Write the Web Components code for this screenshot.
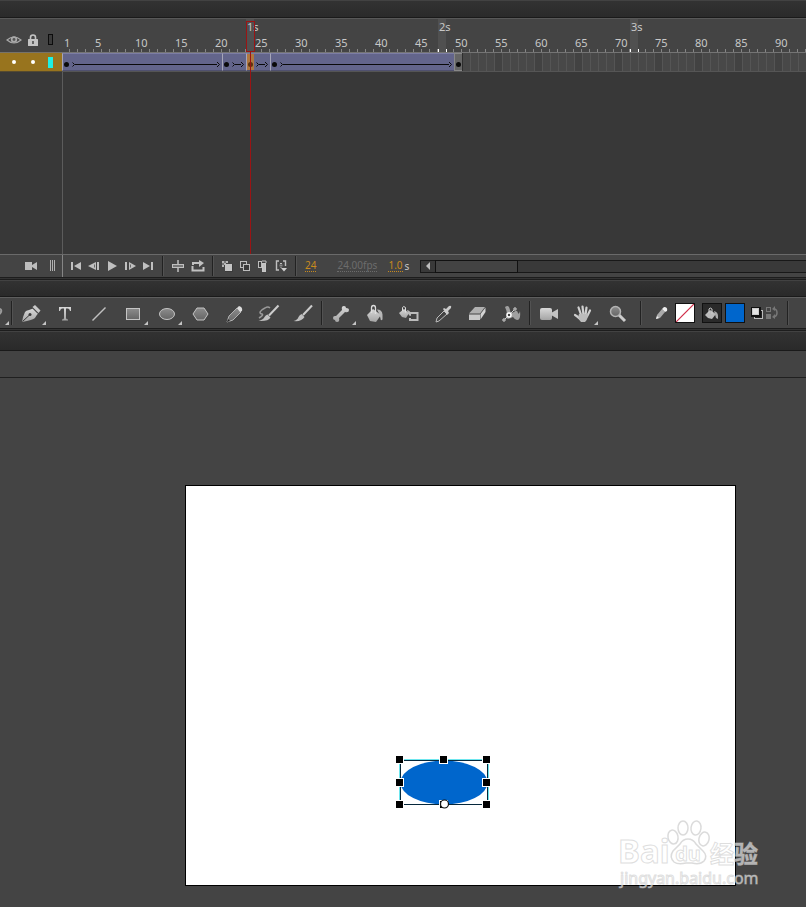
<!DOCTYPE html>
<html lang="en">
<head>
<meta charset="utf-8">
<title>Animation timeline</title>
<style>
  html, body { margin: 0; height: 100%; background: #444; }
  body { font-family: "Noto Sans", "Noto Sans CJK SC", sans-serif; font-size: 11px; color: #c8c8c8; }
</style>
</head>
<body>
<animate-app></animate-app>
<script>
const ICONS = {
  eye: [16, 12, '<path d="M1 6Q8 0 15 6Q8 12 1 6Z" fill="none" stroke="#a9a9a9" stroke-width="1.2"/><circle cx="8" cy="5.5" r="3.2" fill="#a9a9a9"/><circle cx="8" cy="5.5" r="1.4" fill="#555"/>'],
  lock: [12, 14, '<path d="M3.500 7V4.500a2.500 2.500 0 0 1 5 0V7" fill="none" stroke="#c4c4c4" stroke-width="1.600"/><rect x="1" y="6" width="10" height="7" rx=".5" fill="#c4c4c4"/><path d="M6 8v3" stroke="#444" stroke-width="1.500"/>'],
  outline: [8, 14, '<rect x="1.500" y="1.500" width="4" height="10" fill="#3a3a3a" stroke="#0c0c0c"/>'],
  camSmall: [14, 10, '<path d="M1 1h7v3l5-3v8l-5-3v3H1Z" fill="#bdbdbd"/>'],
  grip: [8, 12, '<path d="M1.500 0v11M3.500 0v11M5.500 0v11" stroke="#b0b0b0"/>'],
  first: [12, 10, '<path d="M1 1h2v8H1ZM11 1v8L4 5Z" fill="#c0c0c0"/>'],
  prev: [12, 10, '<path d="M8 1v8L0 5ZM9 1h2v8H9Z" fill="#c0c0c0"/><path d="M6.500 3.500v3" stroke="#666"/>'],
  play: [12, 12, '<path d="M2 1l9 5-9 5Z" fill="#c0c0c0"/>'],
  next: [12, 10, '<path d="M1 1h2v8H1ZM5 1v8l7-4Z" fill="#c0c0c0"/><path d="M6.500 3.500v3" stroke="#666"/>'],
  last: [12, 10, '<path d="M9 1h2v8H9ZM1 1v8l7-4Z" fill="#c0c0c0"/>'],
  center: [12, 12, '<path d="M6 0v12" stroke="#c0c0c0" stroke-width="1.500"/><rect x=".5" y="4.500" width="11" height="3" fill="#777" stroke="#c0c0c0"/>'],
  loop: [14, 12, '<path d="M2 5V3h7" fill="none" stroke="#c0c0c0" stroke-width="2"/><path d="M8 0l5 3-5 4Z" fill="#c0c0c0"/><path d="M1.500 6v4.500h11V7" fill="none" stroke="#c0c0c0" stroke-width="2"/>'],
  onion: [12, 12, '<path d="M1 1h2v2H1ZM5 1h2v2H5ZM3 3h2v2H3ZM1 5h2v2H1Z" fill="#b5b5b5"/><path d="M3 1h2v2H3ZM1 3h2v2H1Z" fill="#777"/><rect x="4" y="4" width="8" height="8" fill="#3a3a3a"/><rect x="4" y="4" width="7" height="7" fill="#c5c5c5"/>'],
  onionOut: [12, 12, '<rect x="1.500" y="1.500" width="6" height="6" fill="none" stroke="#bdbdbd"/><rect x="4.500" y="4.500" width="6" height="6" fill="#3a3a3a" stroke="#bdbdbd"/>'],
  multi: [12, 12, '<rect x="1.500" y="1.500" width="3" height="6" fill="#3a3a3a" stroke="#bdbdbd"/><path d="M5 1h4v2" fill="none" stroke="#bdbdbd"/><rect x="5.500" y="3.500" width="3" height="8" fill="#c0c0c0" stroke="#c8c8c8"/>'],
  markers: [12, 12, '<path d="M4 1H1.500v9H4M8 1h2.500v5" fill="none" stroke="#c0c0c0" stroke-width="1.400"/><path d="M5 3.500h2M6 7v1" fill="none" stroke="#c0c0c0"/><rect x="4.500" y="4.500" width="3" height="2" fill="#888"/><path d="M6 8h6l-3 3.500Z" fill="#d0d0d0"/>'],
  arrowL: [6, 8, '<path d="M5 0v8L1 4Z" fill="#bdbdbd"/>'],
  partial: [14, 30, '<path d="M0 11q3 0 2 3q-1 2-2 2" fill="none" stroke="#9a9a9a" stroke-width="2"/>'],
  pen: [34, 30, '<path d="M8 24Q9 18 11 14Q12 12.500 15 12L19 10.500L24 15.500Q22 18 21 20Q19 22 8 24Z" fill="url(#g)"/><path d="M8.500 23.500L15.500 17" stroke="#3a3a3a"/><circle cx="16" cy="16.500" r="1.500" fill="#3a3a3a"/><path d="M18.500 9L21 7L26.500 12.500L24.500 15Z" fill="#c8c8c8"/><path d="M18.500 10L24 15.500" stroke="#444"/>'],
  text: [34, 30, '<path d="M11 9h12v4h-1q-.5-2.500-2-2.500h-2V20q0 1.500 2 1.500v1h-6v-1q2 0 2-1.500v-9.500h-2q-1.500 0-2 2.500h-1Z" fill="url(#g)"/>'],
  line: [34, 30, '<path d="M10.500 22.500L23.500 9.500" stroke="#c0c0c0" stroke-width="1.400"/>'],
  rect: [34, 30, '<rect x="10.500" y="10.500" width="13" height="11" fill="url(#d)" stroke="#c4c4c4"/>'],
  oval: [34, 30, '<ellipse cx="17" cy="16" rx="7.500" ry="5.500" fill="url(#d)" stroke="#c4c4c4"/>'],
  poly: [34, 30, '<path d="M13 10h7l4 6-4 6h-7l-4-6Z" fill="url(#d)" stroke="#c4c4c4"/>'],
  pencil: [34, 30, '<path d="M9 24l2-6 8-8 4 4-8 8Z" fill="url(#d)" stroke="#b0b0b0"/><path d="M19 10l2-2q4 1 3 5l-2 1Z" fill="#ddd"/><path d="M9 24l1-3 2 2Z" fill="#222"/>'],
  brushPath: [34, 30, '<path d="M18 10Q16 8 13 10Q9 12 8 14Q8 16 10 16Q12 17 7 20" fill="none" stroke="#999" stroke-width="1.500"/><path d="M26.500 7.500L17 17.500" stroke="#ccc" stroke-width="2"/><path d="M15.500 16.500l3 3q-2 4-12 3.500 5-1.500 6-4 1-2 3-2.500Z" fill="#c0c0c0"/>'],
  brush: [34, 30, '<path d="M26 7.500L17 17" stroke="#ccc" stroke-width="2"/><path d="M15.500 16l3 3q-3 5-11 4 4-1 5-4 1-2 3-3Z" fill="#c0c0c0"/>'],
  bone: [34, 30, '<path d="M9 20q0-2 2-2l1 0 6-6q-1-4 2-4 2 0 2 2 3 0 3 2 0 3-4 2l-6 6q1 4-2 4-2 0-2-2-2 0-2-2Z" fill="url(#g)"/>'],
  bucket: [34, 30, '<path d="M9 17l6-6 8 6-5 7-6-1Z" fill="url(#g)"/><path d="M13.500 15V10q0-2.500 2-2.500 2 0 2 2.500v6" fill="none" stroke="#ddd" stroke-width="1.300"/><path d="M19 11.500q5 0 5.500 5v5q-2 2-2-1l-1-4Z" fill="#b8b8b8"/>'],
  inkBottle: [34, 30, '<path d="M7 15l5-4 5 4-3 5-4-1Z" fill="url(#g)"/><path d="M10.500 13V9.500q1-2 3 0v5" fill="none" stroke="#ddd"/><path d="M15 12q3.500 0 4 6l-3-2Z" fill="#b8b8b8"/><path d="M18 17.500V15h7.500v7H18v-2" fill="none" stroke="#bbb" stroke-width="2"/>'],
  dropper: [34, 30, '<path d="M10 24l1-4 7-7 3 3-8 7Z" fill="#444" stroke="#bbb"/><path d="M17 11l1-1 2 1 3-3q3-1 2 2l-3 3 1 2-2 2Z" fill="#ccc"/>'],
  eraser: [34, 30, '<path d="M9 15.500L15 9H25L20 15.500Z" fill="#b0b0b0"/><path d="M9 16.500H20V22H9Z" fill="#c8c8c8"/><path d="M20.500 16L25.500 9.500V14L20.500 21.500Z" fill="#d4d4d4"/>'],
  width: [34, 30, '<path d="M11 9q4-3 5 3 0 4 4 2 3-3 4 1 1 2 2-2 1 9-3 9-2 0-4-3-5 3-7 1 2-5-1-11Z" fill="#a0a0a0"/><path d="M10 22L21 11" stroke="#ccc"/><circle cx="15" cy="17" r="2" fill="#444" stroke="#fff" stroke-width="1.500"/><circle cx="10" cy="22" r="1.200" fill="#444" stroke="#ddd"/><circle cx="21" cy="11" r="1.200" fill="#444" stroke="#ddd"/>'],
  camera: [34, 30, '<rect x="8" y="10" width="12" height="12" rx="2" fill="url(#g)"/><path d="M19 15l7-4v10l-7-4Z" fill="#c4c4c4"/>'],
  hand: [34, 30, '<path d="M15.500 18L12.500 9.500M17.500 17L16.500 8.500M19.500 17L20.500 9.500M21 18.500L24 12.500M14 21Q11 18 9 17" stroke="#d0d0d0" stroke-width="2.200" stroke-linecap="round" fill="none"/><path d="M13 16h9q0 5-3 8h-4Q11 20 13 16Z" fill="#bcbcbc"/>'],
  zoom: [34, 30, '<path d="M19 17l6 6" stroke="#ccc" stroke-width="3"/><circle cx="15.500" cy="13.500" r="5" fill="url(#d)" stroke="#b4b4b4" stroke-width="1.500"/>'],
  strokePen: [20, 20, '<path d="M5 16l1-4 5-6 3 3-5 6Z" fill="#aaa"/><path d="M11 6l2-2q4 0 3 4l-2 1Z" fill="#eee"/><path d="M5 16l1-3 2 2Z" fill="#eee"/>'],
  noStroke: [18, 18, '<path d="M0 18L18 0" stroke="#d02c48" stroke-width="1.200"/>'],
  fillBucket: [18, 18, '<path d="M2 11l5-5 6 4-4 5-4-1Z" fill="#bbb"/><path d="M6 9V5q1-2 3 0v5" fill="none" stroke="#ccc"/><path d="M11 7q4 1 4 5v3l-2-1Z" fill="#aaa"/>'],
  bw: [14, 14, '<rect x="4.500" y="4.500" width="8" height="8" fill="#222" stroke="#bbb"/><rect x="1" y="1" width="10" height="10" fill="#111"/><rect x="2.500" y="2.500" width="6" height="6" fill="#e4e4e4" stroke="#ccc"/>'],
  swap: [14, 14, '<rect x="1.500" y="1.500" width="4" height="4" fill="none" stroke="#777"/><rect x="1" y="8" width="5" height="5" fill="#777"/><path d="M9 3q3 0 3 4 0 3-3 4" fill="none" stroke="#777" stroke-width="1.500"/><path d="M10 0v5L7 3ZM10 8v5l-3-2Z" fill="#777"/>'],
  paw: [44, 50, '<g fill="rgba(255,255,255,.65)" stroke="rgba(190,190,190,.55)" stroke-width="1.500"><ellipse cx="7" cy="19" rx="5" ry="7" transform="rotate(-12 7 19)"/><ellipse cx="17" cy="10" rx="5" ry="7"/><ellipse cx="30" cy="10" rx="5" ry="7" transform="rotate(8 30 10)"/><ellipse cx="38" cy="21" rx="5" ry="7" transform="rotate(14 38 21)"/><path d="M22 21q-5 0-8 5l-7 7q-4 6 1 11 4 3 12 1h6q8 2 12-2 4-5-1-10l-7-7q-3-5-8-5Z"/></g>']
};

/* Defines an element whose open shadow root is cloned from a template. */
function element(name, css, html, setup) {
  const t = document.createElement('template');
  const build = host => '<style>*{box-sizing:border-box}' + css + '</style>' + (typeof html === 'function' ? html(host) : html);
  customElements.define(name, class extends HTMLElement {
    connectedCallback() {
      if (this.shadowRoot) return;
      t.innerHTML = build(this);
      this.attachShadow({ mode: 'open' }).append(t.content.cloneNode(true));
      if (setup) setup(this);
    }
  });
}

element('ui-icon', ':host{display:block;flex:none}svg{display:block}', h => {
  const [w, ht, body] = ICONS[h.getAttribute('name')];
  return `<svg width="${w}" height="${ht}" viewBox="0 0 ${w} ${ht}" aria-hidden="true"><defs>
    <linearGradient id="g" x2="0" y2="1"><stop stop-color="#d8d8d8"/><stop offset="1" stop-color="#a4a4a4"/></linearGradient>
    <linearGradient id="d" x2="0" y2="1"><stop stop-color="#8c8c8c"/><stop offset="1" stop-color="#666"/></linearGradient></defs>${body}</svg>`;
});

element('icon-button', `
  :host{display:block;flex:none;width:var(--w,18px);height:var(--h,18px)}
  button{position:relative;display:flex;align-items:center;justify-content:center;width:100%;height:100%;padding:0;border:0;background:var(--fill,none)}
  :host([framed]) button{border:1px solid #111}
  :host([more]) button::after{content:"";position:absolute;right:2px;bottom:3px;border:2px solid;border-color:transparent #c4c4c4 #c4c4c4 transparent}`,
  h => `<button aria-label="${h.getAttribute('label')}">${h.hasAttribute('icon') ? `<ui-icon name="${h.getAttribute('icon')}"></ui-icon>` : ''}</button>`);

element('bar-divider', ':host{display:block;flex:none;width:2px;align-self:stretch;margin:var(--m,3px) 0;background:linear-gradient(90deg,#222 50%,#525252 50%)}', '');

element('panel-header', ':host{display:block;flex:none;height:var(--h,18px);background:linear-gradient(#323232,#2a2a2a);border-top:1px solid #424242;border-bottom:1px solid #1a1a1a}', '');
element('panel-splitter', ':host{display:block;flex:none;height:3px;background:#333;border:solid #1d1d1d;border-width:1px 0}', '');

/* One 8px cell per frame at 24 frames per second; only whole cells are drawn. */
const rulerCells = count => Array.from({ length: count }, (_, i) => {
  const f = i + 1;
  if (f % 24 === 0 && f % 5) return `<div class="cell second"><span>${f / 24}s</span></div>`;
  return `<div class="cell">${(f === 1 || f % 5 === 0) && f < count - 1 ? `<span>${f}</span>` : ''}</div>`;
}).join('');
element('time-ruler', `
  :host{display:block;height:34px;overflow:hidden}
  .cells{display:flex;height:100%}
  .cell{flex:none;display:flex;flex-direction:column;justify-content:flex-end;width:8px;padding-left:1px;white-space:nowrap;
    background:linear-gradient(#858585,#858585) right bottom/1px 3px no-repeat}
  .cell:first-child{padding-left:2px}
  span{height:18px;line-height:17px}
  .second{justify-content:flex-start;background:linear-gradient(#fff,#fff) left bottom/1px 3px no-repeat,#505050}
  .second span{line-height:15px}
  .second + .cell{background:linear-gradient(#fff,#fff) left bottom/1px 3px no-repeat,linear-gradient(#858585,#858585) right bottom/1px 3px no-repeat}`,
  '<div class="cells"></div>',
  host => {
    const cells = host.shadowRoot.querySelector('.cells');
    const draw = () => {
      const count = Math.floor(host.clientWidth / 8);
      if (count !== cells.childElementCount) cells.innerHTML = rulerCells(count);
    };
    new ResizeObserver(draw).observe(host);
    draw();
  });

element('tween-span', `
  :host{display:flex;flex:none;align-items:flex-end;width:calc(var(--frames)*8px);height:100%;padding:0 2px 3px 1px;border-left:1px solid #a6a6b8;border-top:1px solid #7c7da4;border-bottom:1px solid #50516f;background:#63658b}
  :host([end]){background:#666;border-color:#888}
  .dot{flex:none;width:5px;height:5px;border-radius:50%;background:#0a0a0a}
  .arrow{flex:1;display:flex;align-items:center;height:5px;margin-left:3px}
  .arrow i{flex:1;height:1px;background:#0a0a0a;margin:0 -1px}
  svg{flex:none;display:block}
  :host([current]){background:linear-gradient(90deg,#b07840 7px,#63658b 7px)}
  :host([current]) .dot{background:#5d3410}`,
  h => '<span class="dot"></span>' + (h.hasAttribute('end') ? '' : `<span class="arrow">
    <svg width="4" height="5"><path d="M.5 .5L2.500 2.500 .5 4.500" fill="none" stroke="#0a0a0a"/></svg><i></i>
    <svg width="4" height="5"><path d="M1 0L3.500 2.500 1 5" fill="none" stroke="#0a0a0a"/></svg></span>`));

element('frame-track', `
  :host{display:flex;height:100%;overflow:hidden}
  .rest{flex:1;border-left:1px solid #2e2e2e;background:
    repeating-linear-gradient(90deg,transparent 0 7px,#555 7px 8px),
    repeating-linear-gradient(90deg,#484848 0 31px,#424242 31px 39px,#484848 39px 40px)}`,
  `<tween-span style="--frames:20"></tween-span><tween-span style="--frames:3"></tween-span>
   <tween-span current style="--frames:3"></tween-span><tween-span style="--frames:23"></tween-span>
   <tween-span end style="--frames:1"></tween-span><div class="rest"></div>`);

element('play-head', `
  :host{position:absolute;top:3px;bottom:0;left:calc(23*8px);width:9px;display:flex;flex-direction:column;align-items:center;pointer-events:none}
  .box{width:9px;height:31px;border:1px solid #9a1414}
  .line{flex:1;width:1px;background:#9a1414}`,
  '<div class="box"></div><div class="line"></div>');

element('time-line', `
  :host{display:grid;grid-template-columns:62px 1fr;grid-template-rows:34px 20px 182px;background:#383838}
  .head{display:grid;grid-template-columns:24px 14px 1fr;justify-items:center;align-items:center;padding:9px 0 0 2px;background:#444;border-top:1px solid #585858}
  .head ui-icon:last-child{justify-self:end;margin-right:7px}
  .layer{display:grid;grid-template-columns:24px 14px 1fr;align-items:center;justify-items:center;padding-left:2px;background:#98741e;border-top:1px solid #77736a;border-bottom:1px solid #554a30}
  .dot{width:4px;height:4px;border-radius:50%;background:#fff}
  .chip{justify-self:end;width:5px;height:11px;margin-right:9px;background:#1ef0e4}
  .right{grid-column:2;grid-row:1/4;position:relative;display:grid;grid-template-rows:subgrid;min-width:0}
  time-ruler{background:#444;border-top:1px solid #585858}
  .track{border-top:1px solid #747474;border-bottom:1px solid #555;min-width:0}
  .void{border-left:1px solid #5c5c5c}`,
  `<div class="head"><ui-icon name="eye"></ui-icon><ui-icon name="lock"></ui-icon><ui-icon name="outline"></ui-icon></div>
   <div class="layer"><span class="dot"></span><span class="dot"></span><span class="chip"></span></div>
   <div class="right"><time-ruler></time-ruler><div class="track"><frame-track></frame-track></div><div class="void"></div><play-head></play-head></div>`);

element('scroll-strip', `
  :host{display:flex;flex:1;min-width:0;height:13px;border:1px solid #181818;border-right:0;background:#393939}
  icon-button{--w:14px;--h:11px}
  .thumb{width:83px;margin:-1px 0;border:1px solid #111;background:#434343}`,
  '<icon-button icon="arrowL" label="Scroll left"></icon-button><div class="thumb"></div>');

element('timeline-controls', `
  :host{display:flex;align-items:center;height:23px;background:#444;border-top:1px solid #6a6a6a}
  .left{flex:none;display:flex;align-items:center;justify-content:flex-end;gap:8px;width:62px;height:100%;padding-right:4px}
  .left icon-button:last-child{--w:10px}
  .group{display:flex;align-items:center;padding-bottom:1px}
  .moves{align-self:stretch;border-left:1px solid #858585;padding:0 5px 1px 4px}
  .edit{--w:20px;padding-left:4px;padding-right:4px}
  .onion{padding-left:4px;padding-right:5px}
  .nums{gap:11px;padding:0 11px 1px 8px;line-height:12px;font-size:10px}
  button{font:inherit;line-height:11px;padding:0;border:0;border-bottom:1px dotted currentColor;background:none;color:#c88a1e}
  .fps{color:#6c6c6c;margin-left:10px}
  .time{display:flex;gap:2px}`,
  `<div class="left"><icon-button icon="camSmall" label="Add camera"></icon-button><icon-button icon="grip" label="Resize layer names"></icon-button></div>
   <div class="group moves"><icon-button icon="first" label="First frame"></icon-button><icon-button icon="prev" label="Step back"></icon-button><icon-button icon="play" label="Play"></icon-button><icon-button icon="next" label="Step forward"></icon-button><icon-button icon="last" label="Last frame"></icon-button></div><bar-divider style="--m:1px"></bar-divider>
   <div class="group edit"><icon-button icon="center" label="Center frame"></icon-button><icon-button icon="loop" label="Loop"></icon-button></div><bar-divider style="--m:1px"></bar-divider>
   <div class="group onion"><icon-button icon="onion" label="Onion skin"></icon-button><icon-button icon="onionOut" label="Onion skin outlines"></icon-button><icon-button icon="multi" label="Edit multiple frames"></icon-button><icon-button icon="markers" label="Modify markers"></icon-button></div><bar-divider style="--m:1px"></bar-divider>
   <div class="group nums"><button>24</button><button class="fps">24.00fps</button><div class="time"><button>1.0</button><span>s</span></div></div>
   <scroll-strip></scroll-strip>`);

const tool = ([icon, label, more]) => `<icon-button icon="${icon}" label="${label}"${more ? ' more' : ''}></icon-button>`;
element('tool-bar', `
  :host{display:flex;align-items:center;height:31px;background:#444;border-top:1px solid #5e5e5e;overflow:hidden}
  .tools{display:flex;margin:0 1px;--w:34px;--h:30px}
  .first{margin:0;--w:11px}
  .view{margin-right:6px}
  .paint{display:flex;align-items:center;--w:20px;--h:20px;padding:0 8px 0 9px}
  .paint > *{margin-right:4px}
  .paint .stroke{--fill:#fff;margin-right:7px}
  .paint .bucket{--fill:#2a2a2a;margin-right:3px}
  .fill{--fill:#0066cc}
  .paint .mini{--w:15px;margin-right:0}`,
  `<div class="tools first"><icon-button icon="partial" label="Lasso" more></icon-button></div><bar-divider></bar-divider>
   <div class="tools">${[['pen', 'Pen', 1], ['text', 'Text'], ['line', 'Line'], ['rect', 'Rectangle', 1], ['oval', 'Oval', 1], ['poly', 'PolyStar'], ['pencil', 'Pencil'], ['brushPath', 'Paint brush'], ['brush', 'Brush']].map(tool).join('')}</div><bar-divider></bar-divider>
   <div class="tools">${[['bone', 'Bone', 1], ['bucket', 'Paint bucket'], ['inkBottle', 'Ink bottle'], ['dropper', 'Eyedropper'], ['eraser', 'Eraser'], ['width', 'Width']].map(tool).join('')}</div><bar-divider></bar-divider>
   <div class="tools view">${[['camera', 'Camera'], ['hand', 'Hand', 1], ['zoom', 'Zoom']].map(tool).join('')}</div><bar-divider></bar-divider>
   <div class="paint"><icon-button icon="strokePen" label="Stroke color"></icon-button><icon-button class="stroke" framed icon="noStroke" label="No stroke"></icon-button><icon-button class="bucket" framed icon="fillBucket" label="Fill color"></icon-button><icon-button class="fill" framed label="Blue fill"></icon-button><icon-button class="mini" icon="bw" label="Black and white"></icon-button><icon-button class="mini" icon="swap" label="Swap colors"></icon-button></div><bar-divider></bar-divider>`);

const handles = [[5, 5], [49, 5], [92, 5], [5, 28], [92, 28], [5, 50], [49, 50], [92, 50]]
  .map(([x, y]) => `<rect x="${x - 4}" y="${y - 4}" width="9" height="9" fill="#fff"/><rect x="${x - 3}" y="${y - 3}" width="7" height="7" fill="#000"/>`).join('');
element('selected-shape', ':host{position:absolute;left:208px;top:268px}svg{display:block}',
  `<svg width="100" height="58" role="img" aria-label="Selected blue oval"><ellipse cx="50" cy="28.500" rx="43.500" ry="22" fill="#0066cc"/>
   <path d="M5.500 50.500V5.500H94M94.500 5V51" fill="none" stroke="#6ee6ee"/><rect x="6.500" y="6.500" width="87" height="44" fill="none" stroke="#06283c"/>${handles}
   <circle cx="50.500" cy="50" r="4" fill="#fff" stroke="#111" stroke-width="1.200"/></svg>`);

element('water-mark', `
  :host{position:absolute;left:100%;top:100%;width:148px;margin:-67px 0 0 -117px;color:rgba(255,255,255,.62);-webkit-text-stroke:1px rgba(190,190,190,.5);pointer-events:none}
  .row{display:flex;align-items:flex-end;height:50px}
  .bai{font:700 33px/34px "Noto Sans",sans-serif;width:48px}
  .paw{position:relative;width:44px}
  .du{position:absolute;left:0;right:0;bottom:2px;text-align:center;font:700 20px/24px "Noto Sans",sans-serif}
  .cn{font:700 24px/30px "Noto Sans CJK SC",sans-serif}
  .url{font:16px/20px "Noto Sans",sans-serif;padding-left:2px}`,
  `<div class="row"><span class="bai">Bai</span><span class="paw"><ui-icon name="paw"></ui-icon><span class="du">du</span></span><span class="cn">经验</span></div><div class="url">jingyan.baidu.com</div>`);

element('paste-board', `
  :host{display:block;flex:1;min-height:0;padding:107px 70px 21px 185px;background:#444;overflow:hidden}
  .stage{position:relative;aspect-ratio:551/401;background:#fff;border:1px solid #000}`,
  '<div class="stage"><selected-shape></selected-shape><water-mark></water-mark></div>');

element('animate-app', `
  :host{display:flex;flex-direction:column;min-height:100%;background:#444;overflow:hidden}
  .editbar{height:27px;background:#434343;border-bottom:1px solid #202020}`,
  `<panel-header></panel-header><time-line></time-line><timeline-controls></timeline-controls><panel-splitter></panel-splitter>
   <panel-header style="--h:17px"></panel-header><tool-bar></tool-bar><panel-splitter></panel-splitter>
   <panel-header style="--h:20px"></panel-header><div class="editbar"></div><paste-board></paste-board>`);
</script>
</body>
</html>
